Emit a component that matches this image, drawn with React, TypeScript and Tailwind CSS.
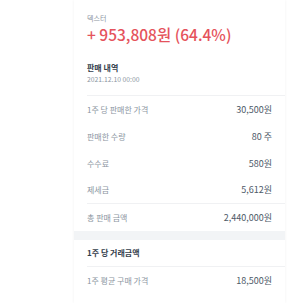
import React from "react";

const font = { fontFamily: '"Noto Sans CJK KR", "Noto Sans", sans-serif' };

function Row({ label, value, border = false }: { label: string; value: string; border?: boolean }) {
  return (
    <div className={"flex h-[27px] items-center justify-between pr-[13px] " + (border ? "border-b border-[#f0f1f3]" : "")}>
      <span className="text-[8px] text-[#8b95a1]">{label}</span>
      <span className="text-[9px] text-[#4e5968]">{value}</span>
    </div>
  );
}

export default function App() {
  return (
    <div className="w-[303px] h-[303px] overflow-hidden bg-white" style={font}>
      <div className="ml-[74px] w-[211px] h-[303px] bg-white shadow-[0_0_3px_rgba(0,0,0,0.06)]">
        <div className="pl-[13px] pt-[13px]">
          <div className="h-[10px] leading-[10px] text-[7px] text-[#8b95a1]">덱스터</div>
          <div className="h-[22px] leading-[22px] text-[15.5px] text-[#e5535c] font-medium">+ 953,808원 (64.4%)</div>
          <div className="mt-[17px] h-[12px] leading-[12px] text-[8px] font-bold text-[#333d4b]">판매 내역</div>
          <div className="h-[10px] leading-[10px] text-[6.8px] text-[#8b95a1]">2021.12.10 00:00</div>
          <div className="mt-[11px] border-b border-[#f0f1f3]" />
          <Row label="1주 당 판매한 가격" value="30,500원" />
          <Row label="판매한 수량" value="80 주" />
          <Row label="수수료" value="580원" />
          <Row label="제세금" value="5,612원" border />
          <Row label="총 판매 금액" value="2,440,000원" />
        </div>
        <div className="h-[9px] bg-[#f2f4f6]" />
        <div className="pl-[13px]">
          <div className="flex h-[27px] items-center border-b border-[#f0f1f3]">
            <span className="text-[8px] font-bold text-[#333d4b]">1주 당 거래금액</span>
          </div>
          <Row label="1주 평균 구매 가격" value="18,500원" />
        </div>
      </div>
    </div>
  );
}
